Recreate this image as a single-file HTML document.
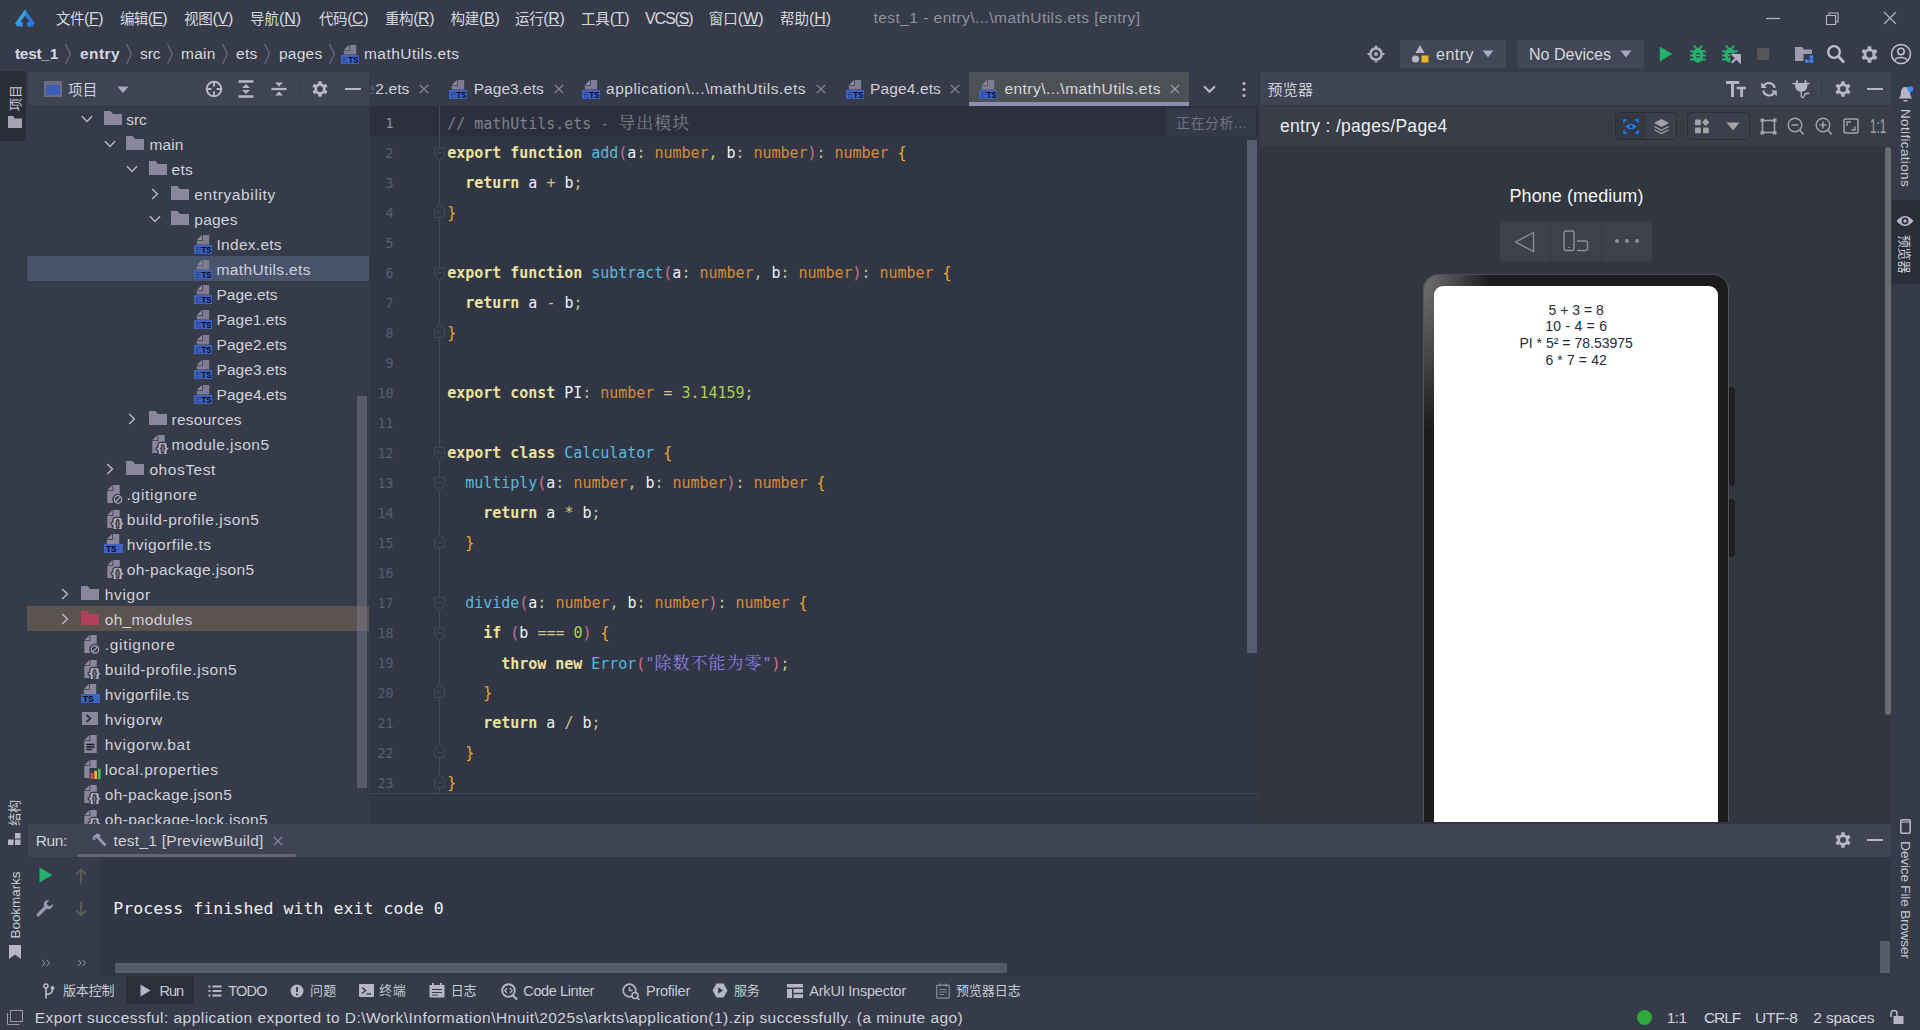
<!DOCTYPE html>
<html lang="zh"><head><meta charset="utf-8"><title>DevEco Studio - test_1</title><style>
html,body{margin:0;padding:0}
body{width:1920px;height:1030px;overflow:hidden;background:#363b4a;position:relative;font-family:"Liberation Sans","Noto Sans CJK SC",sans-serif}
.a{position:absolute;display:block}
.t{position:absolute;white-space:pre;display:block}
</style></head><body>
<div class="a" style="left:0px;top:35px;width:1920px;height:1px;background:#333a52;"></div>
<div class="a" style="left:0px;top:71px;width:26px;height:70px;background:#2a2e39;"></div>
<div class="a" style="left:28px;top:72px;width:341px;height:33px;background:#3e4454;"></div>
<div class="a" style="left:369px;top:72px;width:1px;height:752px;background:#323746;"></div>
<div class="a" style="left:370px;top:106px;width:889px;height:718px;background:#313645;"></div>
<div class="a" style="left:1258px;top:72px;width:2px;height:752px;background:#323746;"></div>
<div class="a" style="left:1260px;top:72px;width:631px;height:33px;background:#3e4454;"></div>
<div class="a" style="left:1260px;top:106px;width:631px;height:40px;background:#393d48;"></div>
<div class="a" style="left:1260px;top:146px;width:631px;height:678px;background:#32363f;"></div>
<div class="a" style="left:1892px;top:200px;width:28px;height:84px;background:#2a2e39;"></div>
<div class="a" style="left:28px;top:824px;width:1863px;height:33px;background:#3e4454;"></div>
<div class="a" style="left:100px;top:857px;width:1791px;height:119px;background:#313645;"></div>
<div class="a" style="left:28px;top:857px;width:72px;height:119px;background:#363b4a;"></div>
<svg class="a" style="left:14px;top:8px;" width="22" height="20" viewBox="0 0 22 20"><defs><linearGradient id="lg1" x1="0" y1="0" x2="1" y2="1"><stop offset="0" stop-color="#34c6e6"/><stop offset="1" stop-color="#2f6fe0"/></linearGradient></defs><path d="M11 1.5 L21 15.5 L18.5 18.5 H13.2 V14.2 H15.8 L11 7.6 L6.2 14.2 H8.8 V18.5 H3.5 L1 15.5 Z" fill="url(#lg1)"/><path d="M11 1.5 L21 15.5 L18.5 18.5 L15.8 14.2 L11 7.6Z" fill="#2b63d6" opacity=".55"/></svg>
<span class="t" style='left:56.00px;top:8.50px;font-size:16px;line-height:20px;color:#d6d8de;letter-spacing:-0.487px;'><span style="font-size:14.5px">文件</span>(<u>F</u>)</span>
<span class="t" style='left:120.00px;top:8.50px;font-size:16px;line-height:20px;color:#d6d8de;letter-spacing:-0.666px;'><span style="font-size:14.5px">编辑</span>(<u>E</u>)</span>
<span class="t" style='left:184.00px;top:8.50px;font-size:16px;line-height:20px;color:#d6d8de;letter-spacing:-0.266px;'><span style="font-size:14.5px">视图</span>(<u>V</u>)</span>
<span class="t" style='left:250.00px;top:8.50px;font-size:16px;line-height:20px;color:#d6d8de;letter-spacing:-0.044px;'><span style="font-size:14.5px">导航</span>(<u>N</u>)</span>
<span class="t" style='left:319.00px;top:8.50px;font-size:16px;line-height:20px;color:#d6d8de;letter-spacing:-0.444px;'><span style="font-size:14.5px">代码</span>(<u>C</u>)</span>
<span class="t" style='left:385.00px;top:8.50px;font-size:16px;line-height:20px;color:#d6d8de;letter-spacing:-0.444px;'><span style="font-size:14.5px">重构</span>(<u>R</u>)</span>
<span class="t" style='left:450.50px;top:8.50px;font-size:16px;line-height:20px;color:#d6d8de;letter-spacing:-0.266px;'><span style="font-size:14.5px">构建</span>(<u>B</u>)</span>
<span class="t" style='left:515.00px;top:8.50px;font-size:16px;line-height:20px;color:#d6d8de;letter-spacing:-0.344px;'><span style="font-size:14.5px">运行</span>(<u>R</u>)</span>
<span class="t" style='left:581.00px;top:8.50px;font-size:16px;line-height:20px;color:#d6d8de;letter-spacing:-0.188px;'><span style="font-size:14.5px">工具</span>(<u>T</u>)</span>
<span class="t" style='left:645.00px;top:8.50px;font-size:16px;line-height:20px;color:#d6d8de;letter-spacing:-1.122px;'>VCS(<u>S</u>)</span>
<span class="t" style='left:708.70px;top:8.50px;font-size:16px;line-height:20px;color:#d6d8de;letter-spacing:0.047px;'><span style="font-size:14.5px">窗口</span>(<u>W</u>)</span>
<span class="t" style='left:780.00px;top:8.50px;font-size:16px;line-height:20px;color:#d6d8de;letter-spacing:-0.044px;'><span style="font-size:14.5px">帮助</span>(<u>H</u>)</span>
<span class="t" style='left:873.50px;top:8.00px;font-size:15.5px;line-height:20px;color:#8f939e;letter-spacing:0.451px;'>test_1 - entry\...\mathUtils.ets [entry]</span>
<svg class="a" style="left:1764px;top:10px;" width="140" height="16" viewBox="0 0 140 16"><path d="M2 8.5H16" stroke="#b4b6be" stroke-width="1.2"/><path d="M62.5 5.5H71.500V14.5H62.5Z M65 5.500V3H74V12H71.500" fill="none" stroke="#b4b6be" stroke-width="1.1"/><path d="M120 2L132 14M132 2L120 14" stroke="#b4b6be" stroke-width="1.2"/></svg>
<span class="t" style='left:15.00px;top:44.00px;font-size:15.5px;line-height:20px;color:#d6d8de;letter-spacing:-0.302px;font-weight:bold;'>test_1</span>
<span class="t" style='left:80.00px;top:44.00px;font-size:15.5px;line-height:20px;color:#d6d8de;letter-spacing:0.419px;font-weight:bold;'>entry</span>
<span class="t" style='left:140.00px;top:44.00px;font-size:15.5px;line-height:20px;color:#d6d8de;letter-spacing:-0.057px;'>src</span>
<span class="t" style='left:181.00px;top:44.00px;font-size:15.5px;line-height:20px;color:#d6d8de;letter-spacing:0.223px;'>main</span>
<span class="t" style='left:236.00px;top:44.00px;font-size:15.5px;line-height:20px;color:#d6d8de;letter-spacing:0.271px;'>ets</span>
<span class="t" style='left:279.00px;top:44.00px;font-size:15.5px;line-height:20px;color:#d6d8de;letter-spacing:0.253px;'>pages</span>
<svg class="a" style="left:63px;top:43px;" width="10" height="22" viewBox="0 0 10 22"><path d="M2.5 1L7.500 11L2.5 21" fill="none" stroke="#6d7080" stroke-width="1.1"/></svg>
<svg class="a" style="left:124px;top:43px;" width="10" height="22" viewBox="0 0 10 22"><path d="M2.5 1L7.500 11L2.5 21" fill="none" stroke="#6d7080" stroke-width="1.1"/></svg>
<svg class="a" style="left:165px;top:43px;" width="10" height="22" viewBox="0 0 10 22"><path d="M2.5 1L7.500 11L2.5 21" fill="none" stroke="#6d7080" stroke-width="1.1"/></svg>
<svg class="a" style="left:220px;top:43px;" width="10" height="22" viewBox="0 0 10 22"><path d="M2.5 1L7.500 11L2.5 21" fill="none" stroke="#6d7080" stroke-width="1.1"/></svg>
<svg class="a" style="left:262px;top:43px;" width="10" height="22" viewBox="0 0 10 22"><path d="M2.5 1L7.500 11L2.5 21" fill="none" stroke="#6d7080" stroke-width="1.1"/></svg>
<svg class="a" style="left:327px;top:43px;" width="10" height="22" viewBox="0 0 10 22"><path d="M2.5 1L7.500 11L2.5 21" fill="none" stroke="#6d7080" stroke-width="1.1"/></svg>
<svg class="a" style="left:341px;top:44.5px;" width="18" height="19" viewBox="0 0 18 19"><path d="M2.800 6H8.800V0H15.200V9.500H2.800Z" fill="#7f7c91"/><path d="M2.800 5.200L8 0V5.200Z" fill="#8d8a9f"/><rect x="0" y="10" width="18" height="9" fill="#3d62c4"/><text x="1.500" y="17.800" font-family="Liberation Sans, sans-serif" font-size="9.500" font-weight="bold" fill="#2d4a96">E</text><text x="7.500" y="17.800" font-family="Liberation Sans, sans-serif" font-size="9.500" font-weight="bold" fill="#05070e" textLength="9.800" lengthAdjust="spacingAndGlyphs">TS</text></svg>
<span class="t" style='left:364.00px;top:44.00px;font-size:15.5px;line-height:20px;color:#d6d8de;letter-spacing:0.454px;'>mathUtils.ets</span>
<svg class="a" style="left:1366px;top:44px;" width="20" height="20" viewBox="0 0 20 20"><circle cx="10" cy="10" r="5.600" fill="none" stroke="#b3aec3" stroke-width="2.600"/><circle cx="10" cy="10" r="2" fill="#b3aec3"/><path d="M10 1.500v3M10 15.500v3M1.500 10h3M15.500 10h3" stroke="#b3aec3" stroke-width="2.200"/></svg>
<div class="a" style="left:1400px;top:40px;width:106px;height:28px;background:#414756;"></div>
<svg class="a" style="left:1411px;top:44px;" width="20" height="20" viewBox="0 0 20 20"><path d="M9 1L13.500 9H4.500Z" fill="#b9b6c4"/><circle cx="4.500" cy="15" r="3.6" fill="#b9b6c4"/><rect x="10.500" y="11.500" width="7" height="7" fill="#f0b428"/></svg>
<span class="t" style='left:1436.00px;top:44.80px;font-size:16px;line-height:20px;color:#d6d8de;letter-spacing:0.484px;'>entry</span>
<svg class="a" style="left:1482px;top:50px;" width="12" height="8" viewBox="0 0 12 8"><path d="M0.500 0.500H11.500L6 7.500Z" fill="#a9a6c0"/></svg>
<div class="a" style="left:1517px;top:40px;width:127px;height:28px;background:#414756;"></div>
<span class="t" style='left:1529.00px;top:44.80px;font-size:16px;line-height:20px;color:#d6d8de;letter-spacing:0.019px;'>No Devices</span>
<svg class="a" style="left:1620px;top:50px;" width="12" height="8" viewBox="0 0 12 8"><path d="M0.500 0.500H11.500L6 7.500Z" fill="#a9a6c0"/></svg>
<svg class="a" style="left:1659px;top:46px;" width="14" height="16" viewBox="0 0 14 16"><path d="M0.800 0.500L13.200 8L0.800 15.500Z" fill="#23b26d"/></svg>
<svg class="a" style="left:1690px;top:45.3px;" width="16" height="18" viewBox="0 0 16 18"><ellipse cx="8" cy="10.400" rx="5.300" ry="7.300" fill="#23b26d"/><path d="M3.800 0.600L7.300 4.100M12.200 0.600L8.700 4.100" stroke="#23b26d" stroke-width="1.800"/><path d="M0.300 6.300H15.700M0.300 10.500H15.700M0.300 14.500H15.700" stroke="#23b26d" stroke-width="1.900"/><path d="M5.900 8.600H10.100M5.900 11.900H10.100" stroke="#363b4a" stroke-width="1.300"/></svg>
<svg class="a" style="left:1722px;top:45.3px;" width="19" height="19" viewBox="0 0 19 19"><ellipse cx="8" cy="10.400" rx="5.300" ry="7.300" fill="#23b26d"/><path d="M3.800 0.600L7.300 4.100M12.200 0.600L8.700 4.100" stroke="#23b26d" stroke-width="1.800"/><path d="M0.300 6.300H15.700M0.300 10.500H15.700M0.300 14.500H15.700" stroke="#23b26d" stroke-width="1.900"/><path d="M5.900 8.600H10.100M5.900 11.900H10.100" stroke="#363b4a" stroke-width="1.300"/><rect x="8.300" y="8.700" width="11" height="11" fill="#363b4a"/><path d="M9.800 17.800L16.500 11M11.200 10.200H17.800V16.800Z" stroke="#b3aec3" stroke-width="2.200" fill="#b3aec3" stroke-linejoin="miter"/></svg>
<div class="a" style="left:1757px;top:48px;width:12.3px;height:12px;background:#565656;"></div>
<svg class="a" style="left:1794px;top:45px;" width="20" height="18" viewBox="0 0 20 18"><path d="M1 2H8L10 4.500H18V16H1Z" fill="#9f9cb2"/><rect x="9.500" y="9" width="10.500" height="9" fill="#363b4a"/><rect x="15.600" y="10.500" width="3.600" height="3.200" fill="#3f86ff"/><rect x="11" y="14.500" width="3.600" height="3.200" fill="#3f86ff"/><rect x="15.600" y="14.500" width="3.600" height="3.200" fill="#3f86ff"/></svg>
<svg class="a" style="left:1826px;top:44px;" width="20" height="20" viewBox="0 0 20 20"><circle cx="8" cy="8" r="5.800" fill="none" stroke="#c3bfd2" stroke-width="2.3"/><path d="M12.500 12.500L18 18.500" stroke="#c3bfd2" stroke-width="2.600"/></svg>
<svg class="a" style="left:1860.5px;top:45.5px;" width="17" height="17" viewBox="0 0 16 16"><path fill-rule="evenodd" fill="#b9b5c9" d="M9.86 2.61L9.64 0.27L6.36 0.27L6.14 2.61L4.26 3.70L2.13 2.71L0.49 5.56L2.40 6.91L2.40 9.09L0.49 10.44L2.13 13.29L4.26 12.30L6.14 13.39L6.36 15.73L9.64 15.73L9.86 13.39L11.74 12.30L13.87 13.29L15.51 10.44L13.60 9.09L13.60 6.91L15.51 5.56L13.87 2.71L11.74 3.70ZM8 5.050A2.950 2.950 0 1 0 8 10.950A2.950 2.950 0 1 0 8 5.050Z"/></svg>
<svg class="a" style="left:1890px;top:43px;" width="22" height="22" viewBox="0 0 22 22"><circle cx="11" cy="11" r="9.500" fill="none" stroke="#c3bfd2" stroke-width="1.500"/><circle cx="11" cy="8.500" r="3.200" fill="none" stroke="#c3bfd2" stroke-width="1.500"/><path d="M5 17.500C6 13.500 16 13.500 17 17.500" fill="none" stroke="#c3bfd2" stroke-width="1.500"/></svg>
<div class="a" style="left:0;top:0;width:369px;height:824px;overflow:hidden">
<svg class="a" style="left:44px;top:81px;" width="18" height="16" viewBox="0 0 18 16"><rect x="1" y="1" width="16" height="14" fill="#3a5db8" stroke="#6f6c82" stroke-width="2"/><rect x="0" y="0" width="18" height="4" fill="#6f6c82"/></svg>
<span class="t" style='left:68.00px;top:79.50px;font-size:14.5px;line-height:20px;color:#d0d2d9;letter-spacing:0.250px;'>项目</span>
<svg class="a" style="left:117px;top:86px;" width="12" height="8" viewBox="0 0 12 8"><path d="M0.500 0.500H11.500L6 7Z" fill="#a9a6c0"/></svg>
<svg class="a" style="left:205px;top:80px;" width="18" height="18" viewBox="0 0 18 18"><circle cx="9" cy="9" r="7.300" fill="none" stroke="#b8b5c9" stroke-width="2"/><path d="M9 1.500V6.500M9 11.500V16.500M1.500 9H6.500M11.500 9H16.500" stroke="#b8b5c9" stroke-width="2"/></svg>
<svg class="a" style="left:238px;top:80px;" width="16" height="18" viewBox="0 0 16 18"><path d="M0.500 1.500H15.500M0.500 16.500H15.500" stroke="#b8b5c9" stroke-width="2.500"/><path d="M8 4L12 8H4ZM8 14L12 10H4Z" fill="#b8b5c9"/></svg>
<svg class="a" style="left:271px;top:80px;" width="16" height="18" viewBox="0 0 16 18"><path d="M0.500 9H15.500" stroke="#b8b5c9" stroke-width="2.200"/><path d="M8 6.500L12 2.500H4ZM8 11.500L12 15.500H4Z" fill="#b8b5c9"/></svg>
<div class="a" style="left:299px;top:78px;width:1px;height:22px;background:#363b4a;"></div>
<svg class="a" style="left:312px;top:81px;" width="16" height="16" viewBox="0 0 16 16"><path fill-rule="evenodd" fill="#b9b5c9" d="M9.86 2.61L9.64 0.27L6.36 0.27L6.14 2.61L4.26 3.70L2.13 2.71L0.49 5.56L2.40 6.91L2.40 9.09L0.49 10.44L2.13 13.29L4.26 12.30L6.14 13.39L6.36 15.73L9.64 15.73L9.86 13.39L11.74 12.30L13.87 13.29L15.51 10.44L13.60 9.09L13.60 6.91L15.51 5.56L13.87 2.71L11.74 3.70ZM8 5.050A2.950 2.950 0 1 0 8 10.950A2.950 2.950 0 1 0 8 5.050Z"/></svg>
<div class="a" style="left:345px;top:88px;width:16px;height:2px;background:#b8b5c9;"></div>
<div class="a" style="left:27px;top:256px;width:342px;height:25px;background:#49536b;"></div>
<div class="a" style="left:27px;top:606px;width:342px;height:25px;background:#5a534f;"></div>
<svg class="a" style="left:81px;top:114.5px;" width="12" height="8" viewBox="0 0 12 8"><path d="M1 1.200L6 6.400L11 1.200" fill="none" stroke="#b8b5c6" stroke-width="1.500"/></svg>
<svg class="a" style="left:104px;top:111px;" width="18" height="14" viewBox="0 0 18 14"><path d="M0 0H6.500L9 3H18V14H0Z" fill="#8a879c"/></svg>
<span class="t" style='left:126.20px;top:109.80px;font-size:15.5px;line-height:20px;color:#d0d2d9;letter-spacing:0.009px;'>src</span>
<svg class="a" style="left:104px;top:139.5px;" width="12" height="8" viewBox="0 0 12 8"><path d="M1 1.200L6 6.400L11 1.200" fill="none" stroke="#b8b5c6" stroke-width="1.500"/></svg>
<svg class="a" style="left:126.2px;top:136px;" width="18" height="14" viewBox="0 0 18 14"><path d="M0 0H6.500L9 3H18V14H0Z" fill="#8a879c"/></svg>
<span class="t" style='left:149.40px;top:134.80px;font-size:15.5px;line-height:20px;color:#d0d2d9;letter-spacing:0.123px;'>main</span>
<svg class="a" style="left:126px;top:164.5px;" width="12" height="8" viewBox="0 0 12 8"><path d="M1 1.200L6 6.400L11 1.200" fill="none" stroke="#b8b5c6" stroke-width="1.500"/></svg>
<svg class="a" style="left:148.8px;top:161px;" width="18" height="14" viewBox="0 0 18 14"><path d="M0 0H6.500L9 3H18V14H0Z" fill="#8a879c"/></svg>
<span class="t" style='left:171.60px;top:159.80px;font-size:15.5px;line-height:20px;color:#d0d2d9;letter-spacing:0.238px;'>ets</span>
<svg class="a" style="left:150.5px;top:187.5px;" width="8" height="12" viewBox="0 0 8 12"><path d="M1.200 1L6.400 6L1.200 11" fill="none" stroke="#b8b5c6" stroke-width="1.500"/></svg>
<svg class="a" style="left:171px;top:186px;" width="18" height="14" viewBox="0 0 18 14"><path d="M0 0H6.500L9 3H18V14H0Z" fill="#8a879c"/></svg>
<span class="t" style='left:194.30px;top:184.80px;font-size:15.5px;line-height:20px;color:#d0d2d9;letter-spacing:0.617px;'>entryability</span>
<svg class="a" style="left:148.5px;top:214.5px;" width="12" height="8" viewBox="0 0 12 8"><path d="M1 1.200L6 6.400L11 1.200" fill="none" stroke="#b8b5c6" stroke-width="1.500"/></svg>
<svg class="a" style="left:171px;top:211px;" width="18" height="14" viewBox="0 0 18 14"><path d="M0 0H6.500L9 3H18V14H0Z" fill="#8a879c"/></svg>
<span class="t" style='left:194.30px;top:209.80px;font-size:15.5px;line-height:20px;color:#d0d2d9;letter-spacing:0.233px;'>pages</span>
<svg class="a" style="left:194px;top:235px;" width="18" height="19" viewBox="0 0 18 19"><path d="M2.800 6H8.800V0H15.200V9.500H2.800Z" fill="#7f7c91"/><path d="M2.800 5.200L8 0V5.200Z" fill="#8d8a9f"/><rect x="0" y="10" width="18" height="9" fill="#3d62c4"/><text x="1.500" y="17.800" font-family="Liberation Sans, sans-serif" font-size="9.500" font-weight="bold" fill="#2d4a96">E</text><text x="7.500" y="17.800" font-family="Liberation Sans, sans-serif" font-size="9.500" font-weight="bold" fill="#05070e" textLength="9.800" lengthAdjust="spacingAndGlyphs">TS</text></svg>
<span class="t" style='left:216.50px;top:234.80px;font-size:15.5px;line-height:20px;color:#d0d2d9;letter-spacing:0.277px;'>Index.ets</span>
<svg class="a" style="left:194px;top:260px;" width="18" height="19" viewBox="0 0 18 19"><path d="M2.800 6H8.800V0H15.200V9.500H2.800Z" fill="#7f7c91"/><path d="M2.800 5.200L8 0V5.200Z" fill="#8d8a9f"/><rect x="0" y="10" width="18" height="9" fill="#3d62c4"/><text x="1.500" y="17.800" font-family="Liberation Sans, sans-serif" font-size="9.500" font-weight="bold" fill="#2d4a96">E</text><text x="7.500" y="17.800" font-family="Liberation Sans, sans-serif" font-size="9.500" font-weight="bold" fill="#05070e" textLength="9.800" lengthAdjust="spacingAndGlyphs">TS</text></svg>
<span class="t" style='left:216.50px;top:259.80px;font-size:15.5px;line-height:20px;color:#d0d2d9;letter-spacing:0.370px;'>mathUtils.ets</span>
<svg class="a" style="left:194px;top:285px;" width="18" height="19" viewBox="0 0 18 19"><path d="M2.800 6H8.800V0H15.200V9.500H2.800Z" fill="#7f7c91"/><path d="M2.800 5.200L8 0V5.200Z" fill="#8d8a9f"/><rect x="0" y="10" width="18" height="9" fill="#3d62c4"/><text x="1.500" y="17.800" font-family="Liberation Sans, sans-serif" font-size="9.500" font-weight="bold" fill="#2d4a96">E</text><text x="7.500" y="17.800" font-family="Liberation Sans, sans-serif" font-size="9.500" font-weight="bold" fill="#05070e" textLength="9.800" lengthAdjust="spacingAndGlyphs">TS</text></svg>
<span class="t" style='left:216.50px;top:284.80px;font-size:15.5px;line-height:20px;color:#d0d2d9;letter-spacing:-0.011px;'>Page.ets</span>
<svg class="a" style="left:194px;top:310px;" width="18" height="19" viewBox="0 0 18 19"><path d="M2.800 6H8.800V0H15.200V9.500H2.800Z" fill="#7f7c91"/><path d="M2.800 5.200L8 0V5.200Z" fill="#8d8a9f"/><rect x="0" y="10" width="18" height="9" fill="#3d62c4"/><text x="1.500" y="17.800" font-family="Liberation Sans, sans-serif" font-size="9.500" font-weight="bold" fill="#2d4a96">E</text><text x="7.500" y="17.800" font-family="Liberation Sans, sans-serif" font-size="9.500" font-weight="bold" fill="#05070e" textLength="9.800" lengthAdjust="spacingAndGlyphs">TS</text></svg>
<span class="t" style='left:216.50px;top:309.80px;font-size:15.5px;line-height:20px;color:#d0d2d9;letter-spacing:0.032px;'>Page1.ets</span>
<svg class="a" style="left:194px;top:335px;" width="18" height="19" viewBox="0 0 18 19"><path d="M2.800 6H8.800V0H15.200V9.500H2.800Z" fill="#7f7c91"/><path d="M2.800 5.200L8 0V5.200Z" fill="#8d8a9f"/><rect x="0" y="10" width="18" height="9" fill="#3d62c4"/><text x="1.500" y="17.800" font-family="Liberation Sans, sans-serif" font-size="9.500" font-weight="bold" fill="#2d4a96">E</text><text x="7.500" y="17.800" font-family="Liberation Sans, sans-serif" font-size="9.500" font-weight="bold" fill="#05070e" textLength="9.800" lengthAdjust="spacingAndGlyphs">TS</text></svg>
<span class="t" style='left:216.50px;top:334.80px;font-size:15.5px;line-height:20px;color:#d0d2d9;letter-spacing:0.065px;'>Page2.ets</span>
<svg class="a" style="left:194px;top:360px;" width="18" height="19" viewBox="0 0 18 19"><path d="M2.800 6H8.800V0H15.200V9.500H2.800Z" fill="#7f7c91"/><path d="M2.800 5.200L8 0V5.200Z" fill="#8d8a9f"/><rect x="0" y="10" width="18" height="9" fill="#3d62c4"/><text x="1.500" y="17.800" font-family="Liberation Sans, sans-serif" font-size="9.500" font-weight="bold" fill="#2d4a96">E</text><text x="7.500" y="17.800" font-family="Liberation Sans, sans-serif" font-size="9.500" font-weight="bold" fill="#05070e" textLength="9.800" lengthAdjust="spacingAndGlyphs">TS</text></svg>
<span class="t" style='left:216.50px;top:359.80px;font-size:15.5px;line-height:20px;color:#d0d2d9;letter-spacing:0.065px;'>Page3.ets</span>
<svg class="a" style="left:194px;top:385px;" width="18" height="19" viewBox="0 0 18 19"><path d="M2.800 6H8.800V0H15.200V9.500H2.800Z" fill="#7f7c91"/><path d="M2.800 5.200L8 0V5.200Z" fill="#8d8a9f"/><rect x="0" y="10" width="18" height="9" fill="#3d62c4"/><text x="1.500" y="17.800" font-family="Liberation Sans, sans-serif" font-size="9.500" font-weight="bold" fill="#2d4a96">E</text><text x="7.500" y="17.800" font-family="Liberation Sans, sans-serif" font-size="9.500" font-weight="bold" fill="#05070e" textLength="9.800" lengthAdjust="spacingAndGlyphs">TS</text></svg>
<span class="t" style='left:216.50px;top:384.80px;font-size:15.5px;line-height:20px;color:#d0d2d9;letter-spacing:0.065px;'>Page4.ets</span>
<svg class="a" style="left:128px;top:412.5px;" width="8" height="12" viewBox="0 0 8 12"><path d="M1.200 1L6.400 6L1.200 11" fill="none" stroke="#b8b5c6" stroke-width="1.500"/></svg>
<svg class="a" style="left:148.8px;top:411px;" width="18" height="14" viewBox="0 0 18 14"><path d="M0 0H6.500L9 3H18V14H0Z" fill="#8a879c"/></svg>
<span class="t" style='left:171.60px;top:409.80px;font-size:15.5px;line-height:20px;color:#d0d2d9;letter-spacing:0.238px;'>resources</span>
<svg class="a" style="left:149.5px;top:435px;" width="20" height="19" viewBox="0 0 20 19"><path d="M2.300 6H8.300V0H14.700V18H2.300Z" fill="#8a879c"/><path d="M2.300 5.200L7.500 0V5.200Z" fill="#8a879c"/><text x="6.700" y="17.300" font-family="Liberation Sans, sans-serif" font-size="13.500" font-weight="bold" textLength="11.800" lengthAdjust="spacingAndGlyphs" fill="#b5b2c4" stroke="#363b4a" stroke-width="2.600" paint-order="stroke" stroke-linejoin="round">{}</text></svg>
<span class="t" style='left:171.60px;top:434.80px;font-size:15.5px;line-height:20px;color:#d0d2d9;letter-spacing:0.475px;'>module.json5</span>
<svg class="a" style="left:106px;top:462.5px;" width="8" height="12" viewBox="0 0 8 12"><path d="M1.200 1L6.400 6L1.200 11" fill="none" stroke="#b8b5c6" stroke-width="1.500"/></svg>
<svg class="a" style="left:126.2px;top:461px;" width="18" height="14" viewBox="0 0 18 14"><path d="M0 0H6.500L9 3H18V14H0Z" fill="#8a879c"/></svg>
<span class="t" style='left:149.40px;top:459.80px;font-size:15.5px;line-height:20px;color:#d0d2d9;letter-spacing:0.569px;'>ohosTest</span>
<svg class="a" style="left:104.5px;top:485px;" width="20" height="19" viewBox="0 0 20 19"><path d="M2.300 6H8.300V0H14.700V18H2.300Z" fill="#8a879c"/><path d="M2.300 5.200L7.500 0V5.200Z" fill="#8a879c"/><circle cx="13" cy="14.400" r="5.700" fill="#363b4a"/><circle cx="13" cy="14.400" r="3.700" fill="none" stroke="#a9a6b8" stroke-width="1.200"/><path d="M10.400 17L15.600 11.800" stroke="#a9a6b8" stroke-width="1.200"/></svg>
<span class="t" style='left:126.50px;top:484.80px;font-size:15.5px;line-height:20px;color:#d0d2d9;letter-spacing:0.733px;'>.gitignore</span>
<svg class="a" style="left:104.5px;top:510px;" width="20" height="19" viewBox="0 0 20 19"><path d="M2.300 6H8.300V0H14.700V18H2.300Z" fill="#8a879c"/><path d="M2.300 5.200L7.500 0V5.200Z" fill="#8a879c"/><text x="6.700" y="17.300" font-family="Liberation Sans, sans-serif" font-size="13.500" font-weight="bold" textLength="11.800" lengthAdjust="spacingAndGlyphs" fill="#b5b2c4" stroke="#363b4a" stroke-width="2.600" paint-order="stroke" stroke-linejoin="round">{}</text></svg>
<span class="t" style='left:126.70px;top:509.80px;font-size:15.5px;line-height:20px;color:#d0d2d9;letter-spacing:0.589px;'>build-profile.json5</span>
<svg class="a" style="left:104px;top:534.0px;" width="19" height="19" viewBox="0 0 19 19"><path d="M2.800 6H8.800V0H15.200V10H2.800Z" fill="#8a879c"/><path d="M2.800 5.200L8 0V5.200Z" fill="#8a879c"/><rect x="0" y="10" width="19" height="9" fill="#3d62c4"/><text x="2" y="17.800" font-family="Liberation Sans, sans-serif" font-size="9.500" font-weight="bold" fill="#05070e" textLength="10.500" lengthAdjust="spacingAndGlyphs">TS</text></svg>
<span class="t" style='left:126.70px;top:534.80px;font-size:15.5px;line-height:20px;color:#d0d2d9;letter-spacing:0.492px;'>hvigorfile.ts</span>
<svg class="a" style="left:104.5px;top:560px;" width="20" height="19" viewBox="0 0 20 19"><path d="M2.300 6H8.300V0H14.700V18H2.300Z" fill="#8a879c"/><path d="M2.300 5.200L7.500 0V5.200Z" fill="#8a879c"/><text x="6.700" y="17.300" font-family="Liberation Sans, sans-serif" font-size="13.500" font-weight="bold" textLength="11.800" lengthAdjust="spacingAndGlyphs" fill="#b5b2c4" stroke="#363b4a" stroke-width="2.600" paint-order="stroke" stroke-linejoin="round">{}</text></svg>
<span class="t" style='left:126.70px;top:559.80px;font-size:15.5px;line-height:20px;color:#d0d2d9;letter-spacing:0.333px;'>oh-package.json5</span>
<svg class="a" style="left:61px;top:587.5px;" width="8" height="12" viewBox="0 0 8 12"><path d="M1.200 1L6.400 6L1.200 11" fill="none" stroke="#b8b5c6" stroke-width="1.500"/></svg>
<svg class="a" style="left:81px;top:586px;" width="18" height="14" viewBox="0 0 18 14"><path d="M0 0H6.500L9 3H18V14H0Z" fill="#8a879c"/></svg>
<span class="t" style='left:104.70px;top:584.80px;font-size:15.5px;line-height:20px;color:#d0d2d9;letter-spacing:0.664px;'>hvigor</span>
<svg class="a" style="left:61px;top:612.5px;" width="8" height="12" viewBox="0 0 8 12"><path d="M1.200 1L6.400 6L1.200 11" fill="none" stroke="#b8b5c6" stroke-width="1.500"/></svg>
<svg class="a" style="left:81px;top:611px;" width="18" height="14" viewBox="0 0 18 14"><path d="M0 0H6.500L9 3H18V14H0Z" fill="#b0405c"/></svg>
<span class="t" style='left:104.70px;top:609.80px;font-size:15.5px;line-height:20px;color:#d0d2d9;letter-spacing:0.345px;'>oh_modules</span>
<svg class="a" style="left:82px;top:635px;" width="20" height="19" viewBox="0 0 20 19"><path d="M2.300 6H8.300V0H14.700V18H2.300Z" fill="#8a879c"/><path d="M2.300 5.200L7.500 0V5.200Z" fill="#8a879c"/><circle cx="13" cy="14.400" r="5.700" fill="#363b4a"/><circle cx="13" cy="14.400" r="3.700" fill="none" stroke="#a9a6b8" stroke-width="1.200"/><path d="M10.400 17L15.600 11.800" stroke="#a9a6b8" stroke-width="1.200"/></svg>
<span class="t" style='left:104.70px;top:634.80px;font-size:15.5px;line-height:20px;color:#d0d2d9;letter-spacing:0.713px;'>.gitignore</span>
<svg class="a" style="left:82px;top:660px;" width="20" height="19" viewBox="0 0 20 19"><path d="M2.300 6H8.300V0H14.700V18H2.300Z" fill="#8a879c"/><path d="M2.300 5.200L7.500 0V5.200Z" fill="#8a879c"/><text x="6.700" y="17.300" font-family="Liberation Sans, sans-serif" font-size="13.500" font-weight="bold" textLength="11.800" lengthAdjust="spacingAndGlyphs" fill="#b5b2c4" stroke="#363b4a" stroke-width="2.600" paint-order="stroke" stroke-linejoin="round">{}</text></svg>
<span class="t" style='left:104.70px;top:659.80px;font-size:15.5px;line-height:20px;color:#d0d2d9;letter-spacing:0.579px;'>build-profile.json5</span>
<svg class="a" style="left:81px;top:684.0px;" width="19" height="19" viewBox="0 0 19 19"><path d="M2.800 6H8.800V0H15.200V10H2.800Z" fill="#8a879c"/><path d="M2.800 5.200L8 0V5.200Z" fill="#8a879c"/><rect x="0" y="10" width="19" height="9" fill="#3d62c4"/><text x="2" y="17.800" font-family="Liberation Sans, sans-serif" font-size="9.500" font-weight="bold" fill="#05070e" textLength="10.500" lengthAdjust="spacingAndGlyphs">TS</text></svg>
<span class="t" style='left:104.70px;top:684.80px;font-size:15.5px;line-height:20px;color:#d0d2d9;letter-spacing:0.492px;'>hvigorfile.ts</span>
<svg class="a" style="left:82px;top:711.5px;" width="16" height="13" viewBox="0 0 16 13"><rect x="0" y="0" width="16" height="13" fill="#8a879c"/><path d="M4.500 3L8.500 6.500L4.500 10" fill="none" stroke="#2e3240" stroke-width="1.700"/></svg>
<span class="t" style='left:104.70px;top:709.80px;font-size:15.5px;line-height:20px;color:#d0d2d9;letter-spacing:0.697px;'>hvigorw</span>
<svg class="a" style="left:82px;top:735px;" width="20" height="19" viewBox="0 0 20 19"><path d="M2.300 6H8.300V0H14.700V18H2.300Z" fill="#8a879c"/><path d="M2.300 5.200L7.500 0V5.200Z" fill="#8a879c"/><path d="M4.500 9.500H12.500M4.500 12H12.500M4.500 14.500H10" stroke="#15171f" stroke-width="1.300"/></svg>
<span class="t" style='left:104.70px;top:734.80px;font-size:15.5px;line-height:20px;color:#d0d2d9;letter-spacing:0.716px;'>hvigorw.bat</span>
<svg class="a" style="left:82px;top:760px;" width="20" height="19" viewBox="0 0 20 19"><path d="M2.300 6H8.300V0H14.700V18H2.300Z" fill="#8a879c"/><path d="M2.300 5.200L7.500 0V5.200Z" fill="#8a879c"/><rect x="7.500" y="8" width="12.500" height="11" fill="#363b4a"/><rect x="8.500" y="13" width="2.800" height="6" fill="#e8445a"/><rect x="12.200" y="10.800" width="2.800" height="8.200" fill="#e8b22c"/><rect x="15.900" y="8.800" width="2.800" height="10.200" fill="#3fb950"/></svg>
<span class="t" style='left:104.70px;top:759.80px;font-size:15.5px;line-height:20px;color:#d0d2d9;letter-spacing:0.543px;'>local.properties</span>
<svg class="a" style="left:82px;top:785px;" width="20" height="19" viewBox="0 0 20 19"><path d="M2.300 6H8.300V0H14.700V18H2.300Z" fill="#8a879c"/><path d="M2.300 5.200L7.500 0V5.200Z" fill="#8a879c"/><text x="6.700" y="17.300" font-family="Liberation Sans, sans-serif" font-size="13.500" font-weight="bold" textLength="11.800" lengthAdjust="spacingAndGlyphs" fill="#b5b2c4" stroke="#363b4a" stroke-width="2.600" paint-order="stroke" stroke-linejoin="round">{}</text></svg>
<span class="t" style='left:104.70px;top:784.80px;font-size:15.5px;line-height:20px;color:#d0d2d9;letter-spacing:0.320px;'>oh-package.json5</span>
<svg class="a" style="left:82px;top:810px;" width="20" height="19" viewBox="0 0 20 19"><path d="M2.300 6H8.300V0H14.700V18H2.300Z" fill="#8a879c"/><path d="M2.300 5.200L7.500 0V5.200Z" fill="#8a879c"/><text x="6.700" y="17.300" font-family="Liberation Sans, sans-serif" font-size="13.500" font-weight="bold" textLength="11.800" lengthAdjust="spacingAndGlyphs" fill="#b5b2c4" stroke="#363b4a" stroke-width="2.600" paint-order="stroke" stroke-linejoin="round">{}</text></svg>
<span class="t" style='left:104.70px;top:809.80px;font-size:15.5px;line-height:20px;color:#d0d2d9;letter-spacing:0.391px;'>oh-package-lock.json5</span>
<div class="a" style="left:357px;top:396px;width:10px;height:392px;background:rgba(120,124,138,.5);"></div>
</div>
<div class="a" style="left:370px;top:72px;width:888px;height:34px;overflow:hidden">
<div class="a" style="left:-370px;top:-72px;width:1920px;height:200px">
<span class="t" style='left:366.50px;top:78.70px;font-size:15.5px;line-height:20px;color:#cfd1d8;letter-spacing:0.128px;'><span style="opacity:.25">e</span>2.ets</span>
<svg class="a" style="left:419px;top:83.7px;" width="10" height="10" viewBox="0 0 10 10"><path d="M0.800 0.800L9.200 9.200M9.200 0.800L0.800 9.200" stroke="#8e8aa6" stroke-width="1.200"/></svg>
<svg class="a" style="left:449px;top:80px;" width="18" height="19" viewBox="0 0 18 19"><path d="M2.800 6H8.800V0H15.200V9.500H2.800Z" fill="#7f7c91"/><path d="M2.800 5.200L8 0V5.200Z" fill="#8d8a9f"/><rect x="0" y="10" width="18" height="9" fill="#3d62c4"/><text x="1.500" y="17.800" font-family="Liberation Sans, sans-serif" font-size="9.500" font-weight="bold" fill="#2d4a96">E</text><text x="7.500" y="17.800" font-family="Liberation Sans, sans-serif" font-size="9.500" font-weight="bold" fill="#05070e" textLength="9.800" lengthAdjust="spacingAndGlyphs">TS</text></svg>
<span class="t" style='left:473.75px;top:78.70px;font-size:15.5px;line-height:20px;color:#cfd1d8;letter-spacing:0.021px;'>Page3.ets</span>
<svg class="a" style="left:553.5px;top:83.7px;" width="10" height="10" viewBox="0 0 10 10"><path d="M0.800 0.800L9.200 9.200M9.200 0.800L0.800 9.200" stroke="#8e8aa6" stroke-width="1.200"/></svg>
<svg class="a" style="left:582px;top:80px;" width="18" height="19" viewBox="0 0 18 19"><path d="M2.800 6H8.800V0H15.200V9.500H2.800Z" fill="#7f7c91"/><path d="M2.800 5.200L8 0V5.200Z" fill="#8d8a9f"/><rect x="0" y="10" width="18" height="9" fill="#3d62c4"/><text x="1.500" y="17.800" font-family="Liberation Sans, sans-serif" font-size="9.500" font-weight="bold" fill="#2d4a96">E</text><text x="7.500" y="17.800" font-family="Liberation Sans, sans-serif" font-size="9.500" font-weight="bold" fill="#05070e" textLength="9.800" lengthAdjust="spacingAndGlyphs">TS</text></svg>
<span class="t" style='left:606.00px;top:78.70px;font-size:15.5px;line-height:20px;color:#cfd1d8;letter-spacing:0.509px;'>application\...\mathUtils.ets</span>
<svg class="a" style="left:816px;top:83.7px;" width="10" height="10" viewBox="0 0 10 10"><path d="M0.800 0.800L9.200 9.200M9.200 0.800L0.800 9.200" stroke="#8e8aa6" stroke-width="1.200"/></svg>
<svg class="a" style="left:846px;top:80px;" width="18" height="19" viewBox="0 0 18 19"><path d="M2.800 6H8.800V0H15.200V9.500H2.800Z" fill="#7f7c91"/><path d="M2.800 5.200L8 0V5.200Z" fill="#8d8a9f"/><rect x="0" y="10" width="18" height="9" fill="#3d62c4"/><text x="1.500" y="17.800" font-family="Liberation Sans, sans-serif" font-size="9.500" font-weight="bold" fill="#2d4a96">E</text><text x="7.500" y="17.800" font-family="Liberation Sans, sans-serif" font-size="9.500" font-weight="bold" fill="#05070e" textLength="9.800" lengthAdjust="spacingAndGlyphs">TS</text></svg>
<span class="t" style='left:870.00px;top:78.70px;font-size:15.5px;line-height:20px;color:#cfd1d8;letter-spacing:0.132px;'>Page4.ets</span>
<svg class="a" style="left:950px;top:83.7px;" width="10" height="10" viewBox="0 0 10 10"><path d="M0.800 0.800L9.200 9.200M9.200 0.800L0.800 9.200" stroke="#8e8aa6" stroke-width="1.200"/></svg>
<div class="a" style="left:969px;top:72px;width:220px;height:30px;background:#4d5155;"></div>
<div class="a" style="left:969px;top:102px;width:220px;height:4px;background:#8a8fae;"></div>
<svg class="a" style="left:979px;top:80px;" width="18" height="19" viewBox="0 0 18 19"><path d="M2.800 6H8.800V0H15.200V9.500H2.800Z" fill="#7f7c91"/><path d="M2.800 5.200L8 0V5.200Z" fill="#8d8a9f"/><rect x="0" y="10" width="18" height="9" fill="#3d62c4"/><text x="1.500" y="17.800" font-family="Liberation Sans, sans-serif" font-size="9.500" font-weight="bold" fill="#2d4a96">E</text><text x="7.500" y="17.800" font-family="Liberation Sans, sans-serif" font-size="9.500" font-weight="bold" fill="#05070e" textLength="9.800" lengthAdjust="spacingAndGlyphs">TS</text></svg>
<span class="t" style='left:1004.40px;top:78.70px;font-size:15.5px;line-height:20px;color:#d6d8de;letter-spacing:0.475px;'>entry\...\mathUtils.ets</span>
<svg class="a" style="left:1170px;top:83.7px;" width="10" height="10" viewBox="0 0 10 10"><path d="M0.800 0.800L9.200 9.200M9.200 0.800L0.800 9.200" stroke="#a09cb8" stroke-width="1.200"/></svg>
<svg class="a" style="left:1202.5px;top:85px;" width="13" height="9" viewBox="0 0 13 9"><path d="M1 1.200L6.500 6.800L12 1.200" fill="none" stroke="#b8b5c9" stroke-width="2"/></svg>
<svg class="a" style="left:1241px;top:81px;" width="6" height="17" viewBox="0 0 6 17"><circle cx="3" cy="2.500" r="1.600" fill="#b8b5c9"/><circle cx="3" cy="8.500" r="1.600" fill="#b8b5c9"/><circle cx="3" cy="14.500" r="1.600" fill="#b8b5c9"/></svg>
</div></div>
<div class="a" style="left:370px;top:106px;width:888px;height:30px;background:#2b303c;"></div>
<div class="a" style="left:439px;top:106px;width:1px;height:687px;background:#414c53;"></div>
<div class="a" style="left:370px;top:793px;width:888px;height:1px;background:#3f4d52;"></div>
<div class="a" style="left:1166px;top:108px;width:90px;height:28px;background:#333949;"></div>
<span class="t" style='left:1176.00px;top:113.00px;font-size:14px;line-height:20px;color:#6f7480;letter-spacing:0.475px;'>正在分析...</span>
<div class="a" style="left:1247px;top:140px;width:10px;height:513px;background:#565c6e;"></div>
<span class="t" style='left:385.48px;top:113.80px;font-size:13.3px;line-height:20px;color:#9094a0;font-family:"DejaVu Sans Mono", "Liberation Mono", "Noto Serif CJK SC", monospace;'>1</span>
<span class="t" style='left:385.48px;top:143.80px;font-size:13.3px;line-height:20px;color:#565d6e;font-family:"DejaVu Sans Mono", "Liberation Mono", "Noto Serif CJK SC", monospace;'>2</span>
<span class="t" style='left:385.48px;top:173.80px;font-size:13.3px;line-height:20px;color:#565d6e;font-family:"DejaVu Sans Mono", "Liberation Mono", "Noto Serif CJK SC", monospace;'>3</span>
<span class="t" style='left:385.48px;top:203.80px;font-size:13.3px;line-height:20px;color:#565d6e;font-family:"DejaVu Sans Mono", "Liberation Mono", "Noto Serif CJK SC", monospace;'>4</span>
<span class="t" style='left:385.48px;top:233.80px;font-size:13.3px;line-height:20px;color:#565d6e;font-family:"DejaVu Sans Mono", "Liberation Mono", "Noto Serif CJK SC", monospace;'>5</span>
<span class="t" style='left:385.48px;top:263.80px;font-size:13.3px;line-height:20px;color:#565d6e;font-family:"DejaVu Sans Mono", "Liberation Mono", "Noto Serif CJK SC", monospace;'>6</span>
<span class="t" style='left:385.48px;top:293.80px;font-size:13.3px;line-height:20px;color:#565d6e;font-family:"DejaVu Sans Mono", "Liberation Mono", "Noto Serif CJK SC", monospace;'>7</span>
<span class="t" style='left:385.48px;top:323.80px;font-size:13.3px;line-height:20px;color:#565d6e;font-family:"DejaVu Sans Mono", "Liberation Mono", "Noto Serif CJK SC", monospace;'>8</span>
<span class="t" style='left:385.48px;top:353.80px;font-size:13.3px;line-height:20px;color:#565d6e;font-family:"DejaVu Sans Mono", "Liberation Mono", "Noto Serif CJK SC", monospace;'>9</span>
<span class="t" style='left:377.48px;top:383.80px;font-size:13.3px;line-height:20px;color:#565d6e;font-family:"DejaVu Sans Mono", "Liberation Mono", "Noto Serif CJK SC", monospace;'>10</span>
<span class="t" style='left:377.48px;top:413.80px;font-size:13.3px;line-height:20px;color:#565d6e;font-family:"DejaVu Sans Mono", "Liberation Mono", "Noto Serif CJK SC", monospace;'>11</span>
<span class="t" style='left:377.48px;top:443.80px;font-size:13.3px;line-height:20px;color:#565d6e;font-family:"DejaVu Sans Mono", "Liberation Mono", "Noto Serif CJK SC", monospace;'>12</span>
<span class="t" style='left:377.48px;top:473.80px;font-size:13.3px;line-height:20px;color:#565d6e;font-family:"DejaVu Sans Mono", "Liberation Mono", "Noto Serif CJK SC", monospace;'>13</span>
<span class="t" style='left:377.48px;top:503.80px;font-size:13.3px;line-height:20px;color:#565d6e;font-family:"DejaVu Sans Mono", "Liberation Mono", "Noto Serif CJK SC", monospace;'>14</span>
<span class="t" style='left:377.48px;top:533.80px;font-size:13.3px;line-height:20px;color:#565d6e;font-family:"DejaVu Sans Mono", "Liberation Mono", "Noto Serif CJK SC", monospace;'>15</span>
<span class="t" style='left:377.48px;top:563.80px;font-size:13.3px;line-height:20px;color:#565d6e;font-family:"DejaVu Sans Mono", "Liberation Mono", "Noto Serif CJK SC", monospace;'>16</span>
<span class="t" style='left:377.48px;top:593.80px;font-size:13.3px;line-height:20px;color:#565d6e;font-family:"DejaVu Sans Mono", "Liberation Mono", "Noto Serif CJK SC", monospace;'>17</span>
<span class="t" style='left:377.48px;top:623.80px;font-size:13.3px;line-height:20px;color:#565d6e;font-family:"DejaVu Sans Mono", "Liberation Mono", "Noto Serif CJK SC", monospace;'>18</span>
<span class="t" style='left:377.48px;top:653.80px;font-size:13.3px;line-height:20px;color:#565d6e;font-family:"DejaVu Sans Mono", "Liberation Mono", "Noto Serif CJK SC", monospace;'>19</span>
<span class="t" style='left:377.48px;top:683.80px;font-size:13.3px;line-height:20px;color:#565d6e;font-family:"DejaVu Sans Mono", "Liberation Mono", "Noto Serif CJK SC", monospace;'>20</span>
<span class="t" style='left:377.48px;top:713.80px;font-size:13.3px;line-height:20px;color:#565d6e;font-family:"DejaVu Sans Mono", "Liberation Mono", "Noto Serif CJK SC", monospace;'>21</span>
<span class="t" style='left:377.48px;top:743.80px;font-size:13.3px;line-height:20px;color:#565d6e;font-family:"DejaVu Sans Mono", "Liberation Mono", "Noto Serif CJK SC", monospace;'>22</span>
<span class="t" style='left:377.48px;top:773.80px;font-size:13.3px;line-height:20px;color:#565d6e;font-family:"DejaVu Sans Mono", "Liberation Mono", "Noto Serif CJK SC", monospace;'>23</span>
<svg class="a" style="left:434.0px;top:147.3px;" width="11" height="14.5" viewBox="0 0 11 14.5"><path d="M0.500 0.500H10.500V8.500L5.500 13.500L0.500 8.500Z" fill="#313645" stroke="#3f4c54" stroke-width="1"/><path d="M3 5.500H8" stroke="#3f4c54" stroke-width="1"/></svg>
<svg class="a" style="left:434.0px;top:204.0px;" width="11" height="14.5" viewBox="0 0 11 14.5"><path d="M0.500 13.500H10.500V5.500L5.500 0.500L0.500 5.500Z" fill="#313645" stroke="#3f4c54" stroke-width="1"/><path d="M3 8.500H8" stroke="#3f4c54" stroke-width="1"/></svg>
<svg class="a" style="left:434.0px;top:267.3px;" width="11" height="14.5" viewBox="0 0 11 14.5"><path d="M0.500 0.500H10.500V8.500L5.500 13.500L0.500 8.500Z" fill="#313645" stroke="#3f4c54" stroke-width="1"/><path d="M3 5.500H8" stroke="#3f4c54" stroke-width="1"/></svg>
<svg class="a" style="left:434.0px;top:324.0px;" width="11" height="14.5" viewBox="0 0 11 14.5"><path d="M0.500 13.500H10.500V5.500L5.500 0.500L0.500 5.500Z" fill="#313645" stroke="#3f4c54" stroke-width="1"/><path d="M3 8.500H8" stroke="#3f4c54" stroke-width="1"/></svg>
<svg class="a" style="left:434.0px;top:447.3px;" width="11" height="14.5" viewBox="0 0 11 14.5"><path d="M0.500 0.500H10.500V8.500L5.500 13.500L0.500 8.500Z" fill="#313645" stroke="#3f4c54" stroke-width="1"/><path d="M3 5.500H8" stroke="#3f4c54" stroke-width="1"/></svg>
<svg class="a" style="left:434.0px;top:477.3px;" width="11" height="14.5" viewBox="0 0 11 14.5"><path d="M0.500 0.500H10.500V8.500L5.500 13.500L0.500 8.500Z" fill="#313645" stroke="#3f4c54" stroke-width="1"/><path d="M3 5.500H8" stroke="#3f4c54" stroke-width="1"/></svg>
<svg class="a" style="left:434.0px;top:534.0px;" width="11" height="14.5" viewBox="0 0 11 14.5"><path d="M0.500 13.500H10.500V5.500L5.500 0.500L0.500 5.500Z" fill="#313645" stroke="#3f4c54" stroke-width="1"/><path d="M3 8.500H8" stroke="#3f4c54" stroke-width="1"/></svg>
<svg class="a" style="left:434.0px;top:597.3px;" width="11" height="14.5" viewBox="0 0 11 14.5"><path d="M0.500 0.500H10.500V8.500L5.500 13.500L0.500 8.500Z" fill="#313645" stroke="#3f4c54" stroke-width="1"/><path d="M3 5.500H8" stroke="#3f4c54" stroke-width="1"/></svg>
<svg class="a" style="left:434.0px;top:627.3px;" width="11" height="14.5" viewBox="0 0 11 14.5"><path d="M0.500 0.500H10.500V8.500L5.500 13.500L0.500 8.500Z" fill="#313645" stroke="#3f4c54" stroke-width="1"/><path d="M3 5.500H8" stroke="#3f4c54" stroke-width="1"/></svg>
<svg class="a" style="left:434.0px;top:684.0px;" width="11" height="14.5" viewBox="0 0 11 14.5"><path d="M0.500 13.500H10.500V5.500L5.500 0.500L0.500 5.500Z" fill="#313645" stroke="#3f4c54" stroke-width="1"/><path d="M3 8.500H8" stroke="#3f4c54" stroke-width="1"/></svg>
<svg class="a" style="left:434.0px;top:744.0px;" width="11" height="14.5" viewBox="0 0 11 14.5"><path d="M0.500 13.500H10.500V5.500L5.500 0.500L0.500 5.500Z" fill="#313645" stroke="#3f4c54" stroke-width="1"/><path d="M3 8.500H8" stroke="#3f4c54" stroke-width="1"/></svg>
<svg class="a" style="left:434.0px;top:774.0px;" width="11" height="14.5" viewBox="0 0 11 14.5"><path d="M0.500 13.500H10.500V5.500L5.500 0.500L0.500 5.500Z" fill="#313645" stroke="#3f4c54" stroke-width="1"/><path d="M3 8.500H8" stroke="#3f4c54" stroke-width="1"/></svg>
<span class="t" style='left:447.30px;top:113.40px;font-size:15px;line-height:20px;color:#eceef2;font-family:"DejaVu Sans Mono", "Liberation Mono", "Noto Serif CJK SC", monospace;letter-spacing:-0.030px;'><span style="color:#7b808b">// mathUtils.ets - </span><span style="color:#7b808b;font-size:17px;letter-spacing:1px">导出模块</span></span>
<span class="t" style='left:447.30px;top:143.40px;font-size:15px;line-height:20px;color:#eceef2;font-family:"DejaVu Sans Mono", "Liberation Mono", "Noto Serif CJK SC", monospace;letter-spacing:-0.030px;'><span style="color:#ece29c;font-weight:bold">export function</span> <span style="color:#5bb8dc">add</span><span style="color:#d0708f">(</span><span style="color:#eceef2">a</span><span style="color:#cfc680">: </span><span style="color:#d68a32">number</span><span style="color:#cfc680">, </span><span style="color:#eceef2">b</span><span style="color:#cfc680">: </span><span style="color:#d68a32">number</span><span style="color:#d0708f">)</span><span style="color:#cfc680">: </span><span style="color:#d68a32">number</span> <span style="color:#f0a828">{</span></span>
<span class="t" style='left:447.30px;top:173.40px;font-size:15px;line-height:20px;color:#eceef2;font-family:"DejaVu Sans Mono", "Liberation Mono", "Noto Serif CJK SC", monospace;letter-spacing:-0.030px;'>  <span style="color:#ece29c;font-weight:bold">return</span> <span style="color:#eceef2">a</span> <span style="color:#cfc680">+</span> <span style="color:#eceef2">b</span><span style="color:#cfc680">;</span></span>
<span class="t" style='left:447.30px;top:203.40px;font-size:15px;line-height:20px;color:#eceef2;font-family:"DejaVu Sans Mono", "Liberation Mono", "Noto Serif CJK SC", monospace;letter-spacing:-0.030px;'><span style="color:#f0a828">}</span></span>
<span class="t" style='left:447.30px;top:263.40px;font-size:15px;line-height:20px;color:#eceef2;font-family:"DejaVu Sans Mono", "Liberation Mono", "Noto Serif CJK SC", monospace;letter-spacing:-0.030px;'><span style="color:#ece29c;font-weight:bold">export function</span> <span style="color:#5bb8dc">subtract</span><span style="color:#d0708f">(</span><span style="color:#eceef2">a</span><span style="color:#cfc680">: </span><span style="color:#d68a32">number</span><span style="color:#cfc680">, </span><span style="color:#eceef2">b</span><span style="color:#cfc680">: </span><span style="color:#d68a32">number</span><span style="color:#d0708f">)</span><span style="color:#cfc680">: </span><span style="color:#d68a32">number</span> <span style="color:#f0a828">{</span></span>
<span class="t" style='left:447.30px;top:293.40px;font-size:15px;line-height:20px;color:#eceef2;font-family:"DejaVu Sans Mono", "Liberation Mono", "Noto Serif CJK SC", monospace;letter-spacing:-0.030px;'>  <span style="color:#ece29c;font-weight:bold">return</span> <span style="color:#eceef2">a</span> <span style="color:#cfc680">-</span> <span style="color:#eceef2">b</span><span style="color:#cfc680">;</span></span>
<span class="t" style='left:447.30px;top:323.40px;font-size:15px;line-height:20px;color:#eceef2;font-family:"DejaVu Sans Mono", "Liberation Mono", "Noto Serif CJK SC", monospace;letter-spacing:-0.030px;'><span style="color:#f0a828">}</span></span>
<span class="t" style='left:447.30px;top:383.40px;font-size:15px;line-height:20px;color:#eceef2;font-family:"DejaVu Sans Mono", "Liberation Mono", "Noto Serif CJK SC", monospace;letter-spacing:-0.030px;'><span style="color:#ece29c;font-weight:bold">export const</span> <span style="color:#eceef2">PI</span><span style="color:#cfc680">: </span><span style="color:#d68a32">number</span> <span style="color:#cfc680">=</span> <span style="color:#a9d14f">3.14159</span><span style="color:#cfc680">;</span></span>
<span class="t" style='left:447.30px;top:443.40px;font-size:15px;line-height:20px;color:#eceef2;font-family:"DejaVu Sans Mono", "Liberation Mono", "Noto Serif CJK SC", monospace;letter-spacing:-0.030px;'><span style="color:#ece29c;font-weight:bold">export class</span> <span style="color:#5bb8dc">Calculator</span> <span style="color:#f0a828">{</span></span>
<span class="t" style='left:447.30px;top:473.40px;font-size:15px;line-height:20px;color:#eceef2;font-family:"DejaVu Sans Mono", "Liberation Mono", "Noto Serif CJK SC", monospace;letter-spacing:-0.030px;'>  <span style="color:#5bb8dc">multiply</span><span style="color:#d0708f">(</span><span style="color:#eceef2">a</span><span style="color:#cfc680">: </span><span style="color:#d68a32">number</span><span style="color:#cfc680">, </span><span style="color:#eceef2">b</span><span style="color:#cfc680">: </span><span style="color:#d68a32">number</span><span style="color:#d0708f">)</span><span style="color:#cfc680">: </span><span style="color:#d68a32">number</span> <span style="color:#f0a828">{</span></span>
<span class="t" style='left:447.30px;top:503.40px;font-size:15px;line-height:20px;color:#eceef2;font-family:"DejaVu Sans Mono", "Liberation Mono", "Noto Serif CJK SC", monospace;letter-spacing:-0.030px;'>    <span style="color:#ece29c;font-weight:bold">return</span> <span style="color:#eceef2">a</span> <span style="color:#cfc680">*</span> <span style="color:#eceef2">b</span><span style="color:#cfc680">;</span></span>
<span class="t" style='left:447.30px;top:533.40px;font-size:15px;line-height:20px;color:#eceef2;font-family:"DejaVu Sans Mono", "Liberation Mono", "Noto Serif CJK SC", monospace;letter-spacing:-0.030px;'>  <span style="color:#f0a828">}</span></span>
<span class="t" style='left:447.30px;top:593.40px;font-size:15px;line-height:20px;color:#eceef2;font-family:"DejaVu Sans Mono", "Liberation Mono", "Noto Serif CJK SC", monospace;letter-spacing:-0.030px;'>  <span style="color:#5bb8dc">divide</span><span style="color:#d0708f">(</span><span style="color:#eceef2">a</span><span style="color:#cfc680">: </span><span style="color:#d68a32">number</span><span style="color:#cfc680">, </span><span style="color:#eceef2">b</span><span style="color:#cfc680">: </span><span style="color:#d68a32">number</span><span style="color:#d0708f">)</span><span style="color:#cfc680">: </span><span style="color:#d68a32">number</span> <span style="color:#f0a828">{</span></span>
<span class="t" style='left:447.30px;top:623.40px;font-size:15px;line-height:20px;color:#eceef2;font-family:"DejaVu Sans Mono", "Liberation Mono", "Noto Serif CJK SC", monospace;letter-spacing:-0.030px;'>    <span style="color:#ece29c;font-weight:bold">if</span> <span style="color:#d0708f">(</span><span style="color:#eceef2">b</span> <span style="color:#cfc680">===</span> <span style="color:#a9d14f">0</span><span style="color:#d0708f">)</span> <span style="color:#f0a828">{</span></span>
<span class="t" style='left:447.30px;top:653.40px;font-size:15px;line-height:20px;color:#eceef2;font-family:"DejaVu Sans Mono", "Liberation Mono", "Noto Serif CJK SC", monospace;letter-spacing:-0.030px;'>      <span style="color:#ece29c;font-weight:bold">throw new</span> <span style="color:#5bb8dc">Error</span><span style="color:#d0708f">(</span><span style="color:#8b7fe0">"</span><span style="color:#8b7fe0;font-size:17px;letter-spacing:1px">除数不能为零</span><span style="color:#8b7fe0">"</span><span style="color:#d0708f">)</span><span style="color:#cfc680">;</span></span>
<span class="t" style='left:447.30px;top:683.40px;font-size:15px;line-height:20px;color:#eceef2;font-family:"DejaVu Sans Mono", "Liberation Mono", "Noto Serif CJK SC", monospace;letter-spacing:-0.030px;'>    <span style="color:#f0a828">}</span></span>
<span class="t" style='left:447.30px;top:713.40px;font-size:15px;line-height:20px;color:#eceef2;font-family:"DejaVu Sans Mono", "Liberation Mono", "Noto Serif CJK SC", monospace;letter-spacing:-0.030px;'>    <span style="color:#ece29c;font-weight:bold">return</span> <span style="color:#eceef2">a</span> <span style="color:#cfc680">/</span> <span style="color:#eceef2">b</span><span style="color:#cfc680">;</span></span>
<span class="t" style='left:447.30px;top:743.40px;font-size:15px;line-height:20px;color:#eceef2;font-family:"DejaVu Sans Mono", "Liberation Mono", "Noto Serif CJK SC", monospace;letter-spacing:-0.030px;'>  <span style="color:#f0a828">}</span></span>
<span class="t" style='left:447.30px;top:773.40px;font-size:15px;line-height:20px;color:#eceef2;font-family:"DejaVu Sans Mono", "Liberation Mono", "Noto Serif CJK SC", monospace;letter-spacing:-0.030px;'><span style="color:#f0a828">}</span></span>
<span class="t" style='left:1267.60px;top:79.50px;font-size:15px;line-height:20px;color:#d0d2d9;letter-spacing:0.228px;'>预览器</span>
<div class="a" style="left:1260px;top:105px;width:631px;height:1px;background:#343845;"></div>
<svg class="a" style="left:1726px;top:81px;" width="21" height="16" viewBox="0 0 21 16"><path d="M0 1.500H13.300M6.500 1.500V16" stroke="#b8b5c9" stroke-width="3" fill="none"/><path d="M10.700 7H20M15.600 7V16" stroke="#b8b5c9" stroke-width="2.700" fill="none"/></svg>
<svg class="a" style="left:1760px;top:81px;" width="18" height="17" viewBox="0 0 18 17"><path d="M14.700 7A6 6 0 0 0 3.600 5" fill="none" stroke="#b8b5c9" stroke-width="2.200"/><path d="M1.200 1.300V7H6.900Z" fill="#b8b5c9"/><path d="M3.300 9.500A6 6 0 0 0 14.400 11.500" fill="none" stroke="#b8b5c9" stroke-width="2.200"/><path d="M16.800 15.200V9.500H11.100Z" fill="#b8b5c9"/></svg>
<svg class="a" style="left:1792px;top:79.5px;" width="18" height="19" viewBox="0 0 18 19"><path d="M0.400 3.600H17.600" stroke="#b8b5c9" stroke-width="1.400"/><path d="M5 0.300V3.600M13.500 0.300V3.600" stroke="#b8b5c9" stroke-width="1.800"/><path d="M2.800 4H15.600Q15.400 11.800 9.200 11.800Q3 11.800 2.800 4Z" fill="#b8b5c9"/><path d="M9.200 11V15.500Q9.200 17.800 11 17.500Q12.300 17.200 12.600 15Q13 13 17.500 13.300" fill="none" stroke="#b8b5c9" stroke-width="1.300"/></svg>
<div class="a" style="left:1821px;top:77px;width:1px;height:23px;background:#363b4a;"></div>
<svg class="a" style="left:1835px;top:81.2px;" width="16" height="16" viewBox="0 0 16 16"><path fill-rule="evenodd" fill="#b9b5c9" d="M9.86 2.61L9.64 0.27L6.36 0.27L6.14 2.61L4.26 3.70L2.13 2.71L0.49 5.56L2.40 6.91L2.40 9.09L0.49 10.44L2.13 13.29L4.26 12.30L6.14 13.39L6.36 15.73L9.64 15.73L9.86 13.39L11.74 12.30L13.87 13.29L15.51 10.44L13.60 9.09L13.60 6.91L15.51 5.56L13.87 2.71L11.74 3.70ZM8 5.050A2.950 2.950 0 1 0 8 10.950A2.950 2.950 0 1 0 8 5.050Z"/></svg>
<div class="a" style="left:1867.4px;top:87.7px;width:15.2px;height:2.5px;background:#b8b5c9;"></div>
<span class="t" style='left:1280.00px;top:115.80px;font-size:17.5px;line-height:20px;color:#eceef0;letter-spacing:0.300px;'>entry : /pages/Page4</span>
<div class="a" style="left:1615px;top:112px;width:62px;height:28px;box-sizing:border-box;border:1px solid #2b2e37;border-radius:4px;background:linear-gradient(90deg,#343843 0,#343843 30px,#3b3f4b 30px)"></div>
<svg class="a" style="left:1623px;top:119px;" width="16" height="15" viewBox="0 0 16 15"><path d="M1 4V1H4M12 1H15V4M15 11V14H12M4 14H1V11" fill="none" stroke="#1a84ff" stroke-width="1.400"/><path d="M2.500 7.500Q8 2 13.500 7.500Q8 13 2.500 7.500Z" fill="#1a84ff"/><circle cx="8" cy="7.500" r="1.700" fill="#343843"/></svg>
<svg class="a" style="left:1653px;top:118px;" width="17" height="17" viewBox="0 0 17 17"><path d="M8.500 1L16 5L8.500 9L1 5Z" fill="#a3a3a6"/><path d="M1.500 8.500L8.500 12.200L15.500 8.500M1.500 11.800L8.500 15.500L15.500 11.800" fill="none" stroke="#a3a3a6" stroke-width="1.300"/></svg>
<div class="a" style="left:1687px;top:112px;width:63px;height:28px;box-sizing:border-box;border:1px solid #2b2e37;border-radius:4px;background:#3b3f4b"></div>
<svg class="a" style="left:1694px;top:118px;" width="16" height="16" viewBox="0 0 16 16"><rect x="1" y="1.500" width="5.800" height="5.800" rx="0.800" fill="#a3a3a6"/><rect x="1" y="9.500" width="5.800" height="5.800" rx="0.800" fill="#a3a3a6"/><rect x="9" y="9.500" width="5.800" height="5.800" rx="0.800" fill="#a3a3a6"/><rect x="9" y="1.500" width="5.400" height="5.400" rx="0.800" fill="#a3a3a6" transform="rotate(45 11.700 4.200)"/></svg>
<svg class="a" style="left:1726px;top:122px;" width="14" height="9" viewBox="0 0 14 9"><path d="M0.500 0.500H13.500L7 8.500Z" fill="#a3a3a6"/></svg>
<svg class="a" style="left:1760px;top:118px;" width="17" height="17" viewBox="0 0 17 17"><rect x="2.500" y="2.500" width="12" height="12" fill="none" stroke="#a3a3a6" stroke-width="1.600"/><rect x="0.500" y="0.500" width="3.500" height="3.500" fill="#a3a3a6"/><rect x="13" y="0.500" width="3.500" height="3.500" fill="#a3a3a6"/><rect x="0.500" y="13" width="3.500" height="3.500" fill="#a3a3a6"/><rect x="13" y="13" width="3.500" height="3.500" fill="#a3a3a6"/></svg>
<svg class="a" style="left:1787px;top:117px;" width="18" height="19" viewBox="0 0 18 19"><circle cx="8" cy="8" r="6.800" fill="none" stroke="#a3a3a6" stroke-width="1.400"/><path d="M4.500 8H11.500" stroke="#a3a3a6" stroke-width="1.500"/><path d="M12.800 13L16.500 17.500" stroke="#a3a3a6" stroke-width="1.600"/></svg>
<svg class="a" style="left:1814.5px;top:117px;" width="18" height="19" viewBox="0 0 18 19"><circle cx="8" cy="8" r="6.800" fill="none" stroke="#a3a3a6" stroke-width="1.400"/><path d="M4.500 8H11.500M8 4.500V11.500" stroke="#a3a3a6" stroke-width="1.500"/><path d="M12.800 13L16.500 17.500" stroke="#a3a3a6" stroke-width="1.600"/></svg>
<svg class="a" style="left:1843px;top:118px;" width="16" height="16" viewBox="0 0 16 16"><rect x="1" y="1" width="14" height="14" rx="1.500" fill="none" stroke="#a3a3a6" stroke-width="1.500"/><path d="M4 8V4H8M12 8.500V12H8.500" fill="none" stroke="#a3a3a6" stroke-width="1.400"/></svg>
<span class="t" style='left:1870.30px;top:116.00px;font-size:21px;line-height:20px;color:#a3a3a6;transform:scaleX(.55);transform-origin:0 50%;'>1:1</span>
<div class="a" style="left:1885px;top:147px;width:6px;height:568px;background:#6a6c72;border-radius:3px"></div>
<span class="t" style='left:1509.50px;top:185.50px;font-size:18px;line-height:20px;color:#f4f4f4;letter-spacing:0.067px;'>Phone (medium)</span>
<div class="a" style="left:1500px;top:221px;width:152px;height:40px;background:#3d414b;"></div>
<div class="a" style="left:1550px;top:221px;width:1px;height:40px;background:#343741;"></div>
<div class="a" style="left:1601px;top:221px;width:1px;height:40px;background:#343741;"></div>
<svg class="a" style="left:1514px;top:231px;" width="22" height="22" viewBox="0 0 22 22"><path d="M19.500 1.500V20.500L1.500 11Z" fill="none" stroke="#8d8f96" stroke-width="1.400" stroke-linejoin="round"/></svg>
<svg class="a" style="left:1563px;top:230px;" width="26" height="22" viewBox="0 0 26 22"><rect x="1" y="1" width="10" height="19.500" rx="1.800" fill="none" stroke="#8d8f96" stroke-width="1.400"/><path d="M5 17.500H7" stroke="#8d8f96" stroke-width="1.200"/><path d="M14 11H22.500Q24.500 11 24.500 13V18.500Q24.500 20.500 22.500 20.500H14" fill="none" stroke="#8d8f96" stroke-width="1.400"/></svg>
<svg class="a" style="left:1614px;top:238px;" width="26" height="6" viewBox="0 0 26 6"><circle cx="3" cy="3" r="2" fill="#8d8f96"/><circle cx="13" cy="3" r="2" fill="#8d8f96"/><circle cx="23" cy="3" r="2" fill="#8d8f96"/></svg>
<div class="a" style="left:1400px;top:260px;width:360px;height:562px;overflow:hidden">
<div class="a" style="left:327px;top:127px;width:8px;height:99px;background:#1f1f22;border-radius:0 4px 4px 0"></div>
<div class="a" style="left:327px;top:239px;width:8px;height:58px;background:#1f1f22;border-radius:0 4px 4px 0"></div>
<div class="a" style="left:23px;top:14px;width:306px;height:700px;border-radius:16px;background:radial-gradient(ellipse 68px 150px at 0 6px,#6e6e6e 0,#5c5c5c 25%,#3e3e3e 60%,#1c1c1c 100%);box-shadow:inset -1px 0 0 #55565a, inset 1px 0 0 #505052, inset 0 1px 0 #4c4c4e"></div>
<div class="a" style="left:34px;top:26px;width:284px;height:690px;border-radius:9px;background:#fff"></div>
</div>
<span class="t" style='left:1548.45px;top:299.80px;font-size:14px;line-height:20px;color:#262b36;letter-spacing:0.024px;'>5 + 3 = 8</span>
<span class="t" style='left:1545.20px;top:316.45px;font-size:14px;line-height:20px;color:#262b36;letter-spacing:0.245px;'>10 - 4 = 6</span>
<span class="t" style='left:1519.45px;top:333.10px;font-size:14px;line-height:20px;color:#262b36;letter-spacing:0.013px;'>PI * 5² = 78.53975</span>
<span class="t" style='left:1545.45px;top:349.75px;font-size:14px;line-height:20px;color:#262b36;letter-spacing:0.117px;'>6 * 7 = 42</span>
<span class="t" style='left:35.70px;top:830.50px;font-size:15.5px;line-height:20px;color:#d0d2d9;letter-spacing:-0.362px;'>Run:</span>
<svg class="a" style="left:91px;top:832px;" width="16" height="16" viewBox="0 0 16 16"><path d="M1.500 5L6 1.500L10 3L7.500 6.500Z" fill="#9d9ab0"/><path d="M7 5.500L14.500 13.500" stroke="#9d9ab0" stroke-width="2.600"/><path d="M2 5.500L4 8" stroke="#9d9ab0" stroke-width="2"/></svg>
<span class="t" style='left:113.40px;top:830.50px;font-size:15.5px;line-height:20px;color:#d0d2d9;letter-spacing:0.264px;'>test_1 [PreviewBuild]</span>
<svg class="a" style="left:273.2px;top:836px;" width="10" height="10" viewBox="0 0 10 10"><path d="M0.800 0.800L9.200 9.200M9.200 0.800L0.800 9.200" stroke="#8e8aa6" stroke-width="1.200"/></svg>
<div class="a" style="left:77px;top:854px;width:219px;height:3px;background:#63676f;border-radius:2px"></div>
<svg class="a" style="left:1834.7px;top:832px;" width="16" height="16" viewBox="0 0 16 16"><path fill-rule="evenodd" fill="#b9b5c9" d="M9.86 2.61L9.64 0.27L6.36 0.27L6.14 2.61L4.26 3.70L2.13 2.71L0.49 5.56L2.40 6.91L2.40 9.09L0.49 10.44L2.13 13.29L4.26 12.30L6.14 13.39L6.36 15.73L9.64 15.73L9.86 13.39L11.74 12.30L13.87 13.29L15.51 10.44L13.60 9.09L13.60 6.91L15.51 5.56L13.87 2.71L11.74 3.70ZM8 5.050A2.950 2.950 0 1 0 8 10.950A2.950 2.950 0 1 0 8 5.050Z"/></svg>
<div class="a" style="left:1867px;top:839px;width:16px;height:2px;background:#b8b5c9;"></div>
<svg class="a" style="left:39px;top:867px;" width="14" height="16" viewBox="0 0 14 16"><path d="M0.500 0.500L13.500 8L0.500 15.500Z" fill="#23b26d"/></svg>
<svg class="a" style="left:75px;top:868px;" width="12" height="16" viewBox="0 0 12 16"><path d="M6 15.500V1.500M1 6.500L6 1.500L11 6.500" fill="none" stroke="#5d5c57" stroke-width="1.900"/></svg>
<svg class="a" style="left:36px;top:899px;" width="18" height="18" viewBox="0 0 18 18"><path d="M2.200 15.800L9 9" stroke="#9d9ab0" stroke-width="3.200" stroke-linecap="round"/><path d="M16.800 4.800A4.600 4.600 0 1 1 13.200 1.200L10.800 3.800L11.500 6.500L14.200 7.200Z" fill="#9d9ab0"/></svg>
<svg class="a" style="left:75px;top:901px;" width="12" height="16" viewBox="0 0 12 16"><path d="M6 0.500V14.500M1 9.500L6 14.500L11 9.500" fill="none" stroke="#5d5c57" stroke-width="1.900"/></svg>
<svg class="a" style="left:41px;top:958.5px;" width="10" height="8" viewBox="0 0 10 8"><path d="M1 0.800L4 4L1 7.200M5.500 0.800L8.500 4L5.500 7.200" fill="none" stroke="#9d9ab0" stroke-width="1"/></svg>
<svg class="a" style="left:77px;top:958.5px;" width="10" height="8" viewBox="0 0 10 8"><path d="M1 0.800L4 4L1 7.200M5.500 0.800L8.500 4L5.500 7.200" fill="none" stroke="#9d9ab0" stroke-width="1"/></svg>
<span class="t" style='left:113.20px;top:899.30px;font-size:16.6px;line-height:20px;color:#eef0f2;letter-spacing:0.025px;font-family:"DejaVu Sans Mono", "Liberation Mono", "Noto Serif CJK SC", monospace;'>Process finished with exit code 0</span>
<div class="a" style="left:115px;top:963px;width:892px;height:10px;background:#555b6b;"></div>
<div class="a" style="left:1880px;top:941px;width:10px;height:32px;background:#555b6b;"></div>
<div class="a" style="left:126px;top:976px;width:68px;height:28px;background:#2b2f3a;"></div>
<svg class="a" style="left:43px;top:983px;" width="12" height="16" viewBox="0 0 12 16"><circle cx="3" cy="3" r="2" fill="none" stroke="#b8b5c9" stroke-width="1.500"/><circle cx="9.500" cy="5" r="2" fill="#b8b5c9"/><path d="M3 5V15.500M3 11.500Q9.500 11 9.500 6.500" fill="none" stroke="#b8b5c9" stroke-width="1.700"/></svg>
<span class="t" style='left:63.00px;top:980.70px;font-size:13px;line-height:20px;color:#c8cad2;letter-spacing:-0.129px;'>版本控制</span>
<svg class="a" style="left:139.5px;top:984px;" width="11" height="13" viewBox="0 0 11 13"><path d="M0.500 0.500L10.500 6.500L0.500 12.500Z" fill="#b8b5c9"/></svg>
<span class="t" style='left:159.50px;top:980.70px;font-size:14.5px;line-height:20px;color:#c8cad2;letter-spacing:-1.036px;'>Run</span>
<svg class="a" style="left:208px;top:984.5px;" width="14" height="12" viewBox="0 0 14 12"><path d="M0.500 1.500H2.500M0.500 6H2.500M0.500 10.500H2.500" stroke="#b8b5c9" stroke-width="2"/><path d="M4.500 1.500H13.500M4.500 6H13.500M4.500 10.500H13.500" stroke="#b8b5c9" stroke-width="2"/></svg>
<span class="t" style='left:228.20px;top:980.70px;font-size:14.5px;line-height:20px;color:#c8cad2;letter-spacing:-0.756px;'>TODO</span>
<svg class="a" style="left:290px;top:983.5px;" width="14" height="14" viewBox="0 0 14 14"><circle cx="7" cy="7" r="6.500" fill="#b8b5c9"/><path d="M7 3V8" stroke="#363b4a" stroke-width="1.800"/><circle cx="7" cy="10.500" r="1.100" fill="#363b4a"/></svg>
<span class="t" style='left:310.00px;top:980.70px;font-size:13px;line-height:20px;color:#c8cad2;letter-spacing:0.142px;'>问题</span>
<svg class="a" style="left:359.3px;top:984px;" width="15" height="13" viewBox="0 0 15 13"><rect x="0" y="0" width="15" height="13" rx="1" fill="#b8b5c9"/><path d="M3 3.500L6.500 6.500L3 9.500M7.500 10H12" fill="none" stroke="#363b4a" stroke-width="1.500"/></svg>
<span class="t" style='left:379.30px;top:980.70px;font-size:13px;line-height:20px;color:#c8cad2;letter-spacing:0.342px;'>终端</span>
<svg class="a" style="left:429px;top:982.5px;" width="16" height="15" viewBox="0 0 16 15"><rect x="0.500" y="2" width="15" height="12.500" fill="#b8b5c9"/><path d="M4 0V4M12 0V4" stroke="#b8b5c9" stroke-width="1.800"/><path d="M3 6.500H13M3 9.500H13M3 12H9" stroke="#363b4a" stroke-width="1.200"/></svg>
<span class="t" style='left:450.70px;top:980.70px;font-size:13px;line-height:20px;color:#c8cad2;letter-spacing:-0.258px;'>日志</span>
<svg class="a" style="left:500.5px;top:982.5px;" width="17" height="17" viewBox="0 0 17 17"><circle cx="7.500" cy="7.500" r="6.300" fill="none" stroke="#b8b5c9" stroke-width="1.900"/><path d="M12 12.500L16 16.500" stroke="#b8b5c9" stroke-width="2.200"/><path d="M6 5L3.800 7.500L6 10M9 5L11.200 7.500L9 10" fill="none" stroke="#b8b5c9" stroke-width="1.200"/></svg>
<span class="t" style='left:523.30px;top:980.70px;font-size:14.5px;line-height:20px;color:#c8cad2;letter-spacing:-0.388px;'>Code Linter</span>
<svg class="a" style="left:621.5px;top:982.5px;" width="18" height="17" viewBox="0 0 18 17"><circle cx="7.500" cy="7.500" r="6.300" fill="none" stroke="#b8b5c9" stroke-width="1.700"/><path d="M7.500 4V7.500H10.500" fill="none" stroke="#b8b5c9" stroke-width="1.400"/><circle cx="13" cy="12.500" r="3" fill="#363b4a" stroke="#b8b5c9" stroke-width="1.500"/><path d="M15 14.800L17.500 17" stroke="#b8b5c9" stroke-width="1.600"/></svg>
<span class="t" style='left:646.00px;top:980.70px;font-size:14.5px;line-height:20px;color:#c8cad2;letter-spacing:-0.242px;'>Profiler</span>
<svg class="a" style="left:712px;top:983px;" width="16" height="15" viewBox="0 0 16 15"><path d="M4.500 0.500H11.500L15.500 7.500L11.500 14.500H4.500L0.500 7.500Z" fill="#b8b5c9"/><path d="M6.200 4.200L11 7.500L6.200 10.800Z" fill="#363b4a"/></svg>
<span class="t" style='left:734.00px;top:980.70px;font-size:13px;line-height:20px;color:#c8cad2;letter-spacing:-0.258px;'>服务</span>
<svg class="a" style="left:787.3px;top:983.5px;" width="16" height="14" viewBox="0 0 16 14"><rect x="0" y="0" width="16" height="3.500" fill="#b8b5c9"/><rect x="0" y="5" width="5" height="9" fill="#b8b5c9"/><rect x="6.500" y="5" width="9.500" height="3.800" fill="#b8b5c9"/><rect x="6.500" y="10.200" width="9.500" height="3.800" fill="#b8b5c9"/></svg>
<span class="t" style='left:809.30px;top:980.70px;font-size:14.5px;line-height:20px;color:#c8cad2;letter-spacing:-0.215px;'>ArkUI Inspector</span>
<svg class="a" style="left:936px;top:982.5px;" width="14" height="16" viewBox="0 0 14 16"><rect x="0.700" y="2.200" width="12.600" height="13" rx="1" fill="none" stroke="#8f8ca2" stroke-width="1.200"/><path d="M4 0.500V3.500M10 0.500V3.500" stroke="#8f8ca2" stroke-width="1.200"/><path d="M3.500 6.500H10.500M3.500 9H10.500M3.500 11.500H8" stroke="#8f8ca2" stroke-width="1.100"/></svg>
<span class="t" style='left:956.00px;top:980.70px;font-size:13px;line-height:20px;color:#c8cad2;letter-spacing:-0.063px;'>预览器日志</span>
<svg class="a" style="left:7px;top:1010px;" width="16" height="15" viewBox="0 0 16 15"><rect x="3.500" y="0.500" width="12" height="11" fill="none" stroke="#9d9ab0" stroke-width="1"/><path d="M0.500 3V14.500H12.500" fill="none" stroke="#9d9ab0" stroke-width="1"/></svg>
<span class="t" style='left:34.70px;top:1007.80px;font-size:15.5px;line-height:20px;color:#d0d2d9;letter-spacing:0.461px;'>Export successful: application exported to D:\Work\Information\Hnuit\2025s\arkts\application(1).zip successfully. (a minute ago)</span>
<div class="a" style="left:1636.500px;top:1010.200px;width:15px;height:15px;border-radius:50%;background:#2fa83c"></div>
<span class="t" style='left:1666.70px;top:1007.80px;font-size:15.5px;line-height:20px;color:#d0d2d9;letter-spacing:-0.521px;'>1:1</span>
<span class="t" style='left:1704.00px;top:1007.80px;font-size:15.5px;line-height:20px;color:#d0d2d9;letter-spacing:-1.121px;'>CRLF</span>
<span class="t" style='left:1755.00px;top:1007.80px;font-size:15.5px;line-height:20px;color:#d0d2d9;letter-spacing:-0.244px;'>UTF-8</span>
<span class="t" style='left:1813.30px;top:1007.80px;font-size:15.5px;line-height:20px;color:#d0d2d9;letter-spacing:-0.131px;'>2 spaces</span>
<svg class="a" style="left:1889px;top:1009px;" width="15" height="16" viewBox="0 0 15 16"><rect x="4.500" y="7" width="10" height="8" fill="#b8b5c9"/><path d="M2 8V4.500A3 3 0 0 1 8 4.500V7" fill="none" stroke="#b8b5c9" stroke-width="1.600"/></svg>
<span class="t" style='left:2.80px;top:87.50px;font-size:13px;line-height:20px;color:#c8cad2;letter-spacing:-0.008px;transform:rotate(-90deg);transform-origin:13.00px 10px;'>项目</span>
<svg class="a" style="left:7.5px;top:116px;" width="14" height="12" viewBox="0 0 14 12"><path d="M0 0H5L7 2.500H14V12H0Z" fill="#a5a2b6"/></svg>
<span class="t" style='left:1.75px;top:803.25px;font-size:13px;line-height:20px;color:#c8cad2;letter-spacing:-0.258px;transform:rotate(-90deg);transform-origin:12.75px 10px;'>结构</span>
<svg class="a" style="left:8px;top:833px;" width="13" height="12" viewBox="0 0 13 12"><rect x="7" y="0" width="5.500" height="5.500" fill="#b8b5c9"/><rect x="0" y="6.500" width="5.500" height="5.500" fill="#b8b5c9"/><rect x="7" y="6.500" width="5.500" height="5.500" fill="#b8b5c9"/></svg>
<span class="t" style='left:-18.50px;top:895.00px;font-size:13.5px;line-height:20px;color:#c8cad2;letter-spacing:-0.059px;transform:rotate(-90deg);transform-origin:33.50px 10px;'>Bookmarks</span>
<svg class="a" style="left:8.5px;top:945px;" width="12" height="14" viewBox="0 0 12 14"><path d="M0 0H12V14L6 9.500L0 14Z" fill="#b8b5c9"/></svg>
<svg class="a" style="left:1898px;top:85px;" width="16" height="17" viewBox="0 0 16 17"><path d="M0.800 13.500Q3 11.500 3 7.500Q3 2 7.500 2Q12 2 12 7.500Q12 11.500 14.200 13.500Z" fill="#b8b5c9"/><path d="M5.500 15H9.500V16.500H5.500Z" fill="#b8b5c9"/><circle cx="12.400" cy="4.200" r="2.900" fill="#3f86ff"/></svg>
<span class="t" style='left:1865.50px;top:137.50px;font-size:13.5px;line-height:20px;color:#c8cad2;letter-spacing:0.343px;transform:rotate(90deg);transform-origin:39.00px 10px;'>Notifications</span>
<svg class="a" style="left:1895.5px;top:214.5px;" width="18" height="12" viewBox="0 0 18 12"><path d="M0.500 6Q9 -4 17.500 6Q9 16 0.500 6Z" fill="#b8b5c9"/><circle cx="9" cy="6" r="3.400" fill="#2a2e39"/><circle cx="9" cy="6" r="1.700" fill="#b8b5c9"/></svg>
<span class="t" style='left:1885.15px;top:243.65px;font-size:13px;line-height:20px;color:#c8cad2;letter-spacing:-0.105px;transform:rotate(90deg);transform-origin:19.35px 10px;'>预览器</span>
<svg class="a" style="left:1899.5px;top:819px;" width="11" height="15" viewBox="0 0 11 15"><rect x="0.800" y="0.800" width="9.400" height="13.400" rx="1.200" fill="none" stroke="#b8b5c9" stroke-width="1.600"/><path d="M1 3H10" stroke="#b8b5c9" stroke-width="1.200"/></svg>
<span class="t" style='left:1845.85px;top:890.35px;font-size:13.5px;line-height:20px;color:#c8cad2;letter-spacing:-0.144px;transform:rotate(90deg);transform-origin:58.65px 10px;'>Device File Browser</span>
</body></html>
